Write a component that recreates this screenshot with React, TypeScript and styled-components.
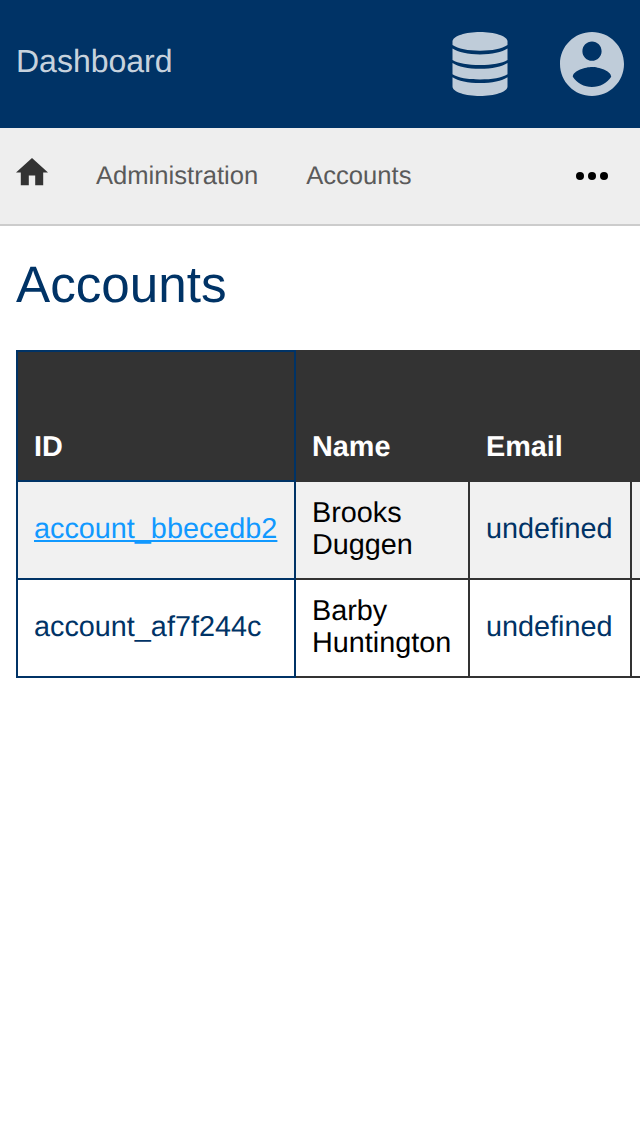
import React from "react";
import styled, { createGlobalStyle, css } from "styled-components";

const GlobalStyle = createGlobalStyle`
  *, *::before, *::after { box-sizing: border-box; }
  html, body { margin: 0; background: #fff; }
  body {
    font-family: "Liberation Sans", Arial, sans-serif;
    color: #000;
    overflow: hidden;
    text-rendering: geometricPrecision;
  }
`;

const Page = styled.div`
  width: 100%;
  min-height: 1136px;
  overflow: hidden;
`;

const Header = styled.header`
  display: flex;
  align-items: center;
  justify-content: space-between;
  height: 128px;
  padding: 0 16px;
  background: #003366;
  color: rgba(255, 255, 255, 0.8);
`;

const Brand = styled.span`
  font-size: 32px;
  line-height: 36px;
  padding-bottom: 6px;
`;

const HeaderActions = styled.div`
  display: flex;
  gap: 48px;
`;

const HeaderButton = styled.a`
  display: flex;
  justify-content: center;
  width: 64px;
  height: 64px;
  color: #bfccd9;
`;

const Breadcrumbs = styled.nav`
  display: flex;
  align-items: center;
  height: 98px;
  padding: 0 32px 0 16px;
  background: #eee;
  border-bottom: 2px solid #ccc;
`;

const HomeLink = styled.a`
  display: flex;
  width: 32px;
  margin-right: 48px;
  padding-bottom: 8px;
  color: #333;
`;

const Crumb = styled.a`
  margin-right: 48px;
  font-size: 25.6px;
  line-height: 30px;
  color: #5a5a5a;
`;

const MoreButton = styled.a`
  display: flex;
  margin-left: auto;
  color: #000;
`;

const Main = styled.main`
  padding: 29px 0 0 16px;
`;

const Title = styled.h1`
  margin: 0 0 35px;
  font-size: 51.2px;
  line-height: 60px;
  font-weight: 400;
  color: #003366;
`;

const Table = styled.table`
  width: 816px;
  table-layout: fixed;
  border-collapse: collapse;
  font-size: 28.8px;
  line-height: 32px;
`;

const Column = styled.col<{ $width: number }>`
  width: ${(p) => p.$width}px;
`;

const cell = css<{ $primary?: boolean }>`
  padding: 15px 16px 17px;
  border: 2px solid ${(p) => (p.$primary ? "#003366" : "#333")};
  text-align: left;
`;

const HeadCell = styled.th<{ $primary?: boolean }>`
  ${cell}
  height: 130px;
  vertical-align: bottom;
  background: #333;
  color: #fff;
`;

const Row = styled.tr<{ $striped?: boolean }>`
  height: 98px;
  background: ${(p) => (p.$striped ? "#f1f1f1" : "#fff")};
`;

const Cell = styled.td<{ $primary?: boolean }>`
  ${cell}
  vertical-align: middle;
`;

const Link = styled.a<{ $active?: boolean }>`
  color: ${(p) => (p.$active ? "#1199ff" : "#003366")};
  text-decoration: ${(p) => (p.$active ? "underline" : "none")};
`;

const accounts = [
  { id: "account_bbecedb2", name: "Brooks Duggen", email: "undefined", active: true },
  { id: "account_af7f244c", name: "Barby Huntington", email: "undefined", active: false },
];

const DatabaseIcon = () => (
  <svg width="56" height="64" viewBox="0 0 56 64" fill="currentColor">
    <path d="M28 0C42 0 55.5 4 55.5 9.5V13C50 16.9 40 18.7 28 18.7S6 16.9 .5 13V9.5C.5 4 14 0 28 0Z" />
    <path d="M.5 16.6C6 20.4 16 22.4 28 22.4S50 20.4 55.5 16.6V28C50 31.4 40 33 28 33S6 31.4 .5 28Z" />
    <path d="M.5 31C6 34.8 16 36.8 28 36.8S50 34.8 55.5 31V42.2C50 45.7 40 47.4 28 47.4S6 45.7 .5 42.2Z" />
    <path d="M.5 45.2C6 49 16 51 28 51S50 49 55.5 45.2V54.5C55.5 60 42 64 28 64S.5 60 .5 54.5Z" />
  </svg>
);

const AccountIcon = () => (
  <svg width="64" height="64" viewBox="2 2 20 20" fill="currentColor">
    <path d="M12 2C6.48 2 2 6.48 2 12s4.48 10 10 10 10-4.48 10-10S17.52 2 12 2zm0 3c1.66 0 3 1.34 3 3s-1.34 3-3 3-3-1.34-3-3 1.34-3 3-3zm0 14.2c-2.5 0-4.71-1.28-6-3.22.03-1.99 4-3.08 6-3.08 1.99 0 5.97 1.09 6 3.08-1.29 1.94-3.5 3.22-6 3.22z" />
  </svg>
);

const HomeIcon = () => (
  <svg width="32" height="28" viewBox="2 3 20 17.5" fill="currentColor">
    <path d="M10 20v-6h4v6h5v-8h3L12 3 2 12h3v8z" />
  </svg>
);

const MoreIcon = () => (
  <svg width="32" height="8" viewBox="0 0 32 8" fill="currentColor">
    <circle cx="4" cy="4" r="4" />
    <circle cx="16" cy="4" r="4" />
    <circle cx="28" cy="4" r="4" />
  </svg>
);

export default function App() {
  return (
    <Page>
      <GlobalStyle />
      <Header>
        <Brand>Dashboard</Brand>
        <HeaderActions>
          <HeaderButton><DatabaseIcon /></HeaderButton>
          <HeaderButton><AccountIcon /></HeaderButton>
        </HeaderActions>
      </Header>
      <Breadcrumbs>
        <HomeLink><HomeIcon /></HomeLink>
        <Crumb>Administration</Crumb>
        <Crumb>Accounts</Crumb>
        <MoreButton><MoreIcon /></MoreButton>
      </Breadcrumbs>
      <Main>
        <Title>Accounts</Title>
        <Table>
          <colgroup>
            <Column $width={278} />
            <Column $width={174} />
            <Column $width={162} />
            <Column $width={200} />
          </colgroup>
          <thead>
            <tr>
              <HeadCell $primary>ID</HeadCell>
              <HeadCell>Name</HeadCell>
              <HeadCell>Email</HeadCell>
              <HeadCell />
            </tr>
          </thead>
          <tbody>
            {accounts.map((a) => (
              <Row key={a.id} $striped={a.active}>
                <Cell $primary><Link $active={a.active}>{a.id}</Link></Cell>
                <Cell>{a.name}</Cell>
                <Cell><Link>{a.email}</Link></Cell>
                <Cell />
              </Row>
            ))}
          </tbody>
        </Table>
      </Main>
    </Page>
  );
}
